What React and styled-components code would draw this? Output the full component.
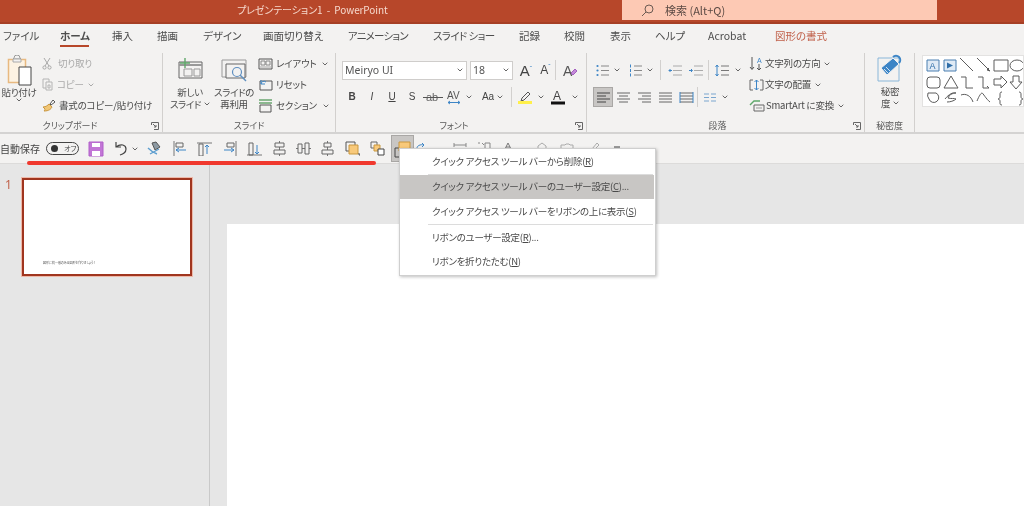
import React from "react";
import styled, { createGlobalStyle } from "styled-components";

const Global = createGlobalStyle`
  html, body { margin: 0; padding: 0; background: #e6e6e6; }
  * { box-sizing: border-box; }
  #root { width: 1024px; height: 506px; overflow: hidden; }
`;
const FONT = `"Noto Sans CJK JP", "Noto Sans", sans-serif`;

const Page = styled.div`
  position: relative; width: 1024px; height: 506px; overflow: hidden;
  display: flex; flex-direction: column; background: #e6e6e6;
  font-family: ${FONT}; font-feature-settings: "palt"; color: #4a4a4a; font-size: 10px; line-height: 1;
  filter: blur(0.4px);
`;
const TitleBar = styled.header`
  height: 24px; flex: none; display: flex; background: #b7472a; border-bottom: 2px solid #a63f25;
`;
const Title = styled.div`
  margin-left: 237px; width: 385px; padding-top: 5px; color: #f6d9cd; font-size: 10px; white-space: pre; letter-spacing: -0.1px;
`;
const Search = styled.div`
  width: 315px; height: 20px; background: #fdc9b4; display: flex; align-items: center; gap: 11px;
  padding-left: 19px; color: #5b4a44; font-size: 11px;
`;
const Tabs = styled.nav`
  height: 24px; flex: none; display: flex; background: #f3f2f1; padding-left: 3px;
`;
const Tab = styled.div`
  width: ${p => p.$w}px; margin-right: ${p => p.$g}px; flex: none; white-space: nowrap; padding-top: 7px;
  font-size: 10.5px; height: 24px; position: relative; color: ${p => p.$color || "#4d4d4d"};
  font-weight: ${p => p.$on ? 700 : 400}; letter-spacing: ${p => p.$ls || 0}px;
  ${p => p.$on && `&::after { content: ""; position: absolute; left: 0; right: 0; bottom: 1px; height: 2px; background: #b7472a; }`}
`;
const Ribbon = styled.section`
  height: 86px; flex: none; display: flex; background: #f3f2f1; border-bottom: 2px solid #d4d3d2; padding-top: 5px;
`;
const Group = styled.div`
  width: ${p => p.$w}px; flex: none; height: 79px; display: flex; flex-direction: column;
  border-right: ${p => p.$last ? "none" : "1px solid #d2d0ce"};
`;
const GroupBody = styled.div`
  height: 65px; flex: none; display: flex; padding-left: ${p => p.$pl || 0}px;
`;
const GroupLabel = styled.div`
  flex: 1; position: relative; text-align: center; font-size: 9px; color: #5a5a5a; padding-top: 3px; white-space: nowrap;
  padding-right: ${p => p.$pr || 0}px; letter-spacing: -0.1px;
`;
const Launcher = styled.svg`
  position: absolute; right: 3px; top: 4px; width: 8px; height: 8px;
`;
const BigButton = styled.div`
  width: ${p => p.$w}px; margin-right: ${p => p.$mr || 0}px; flex: none; display: flex; flex-direction: column; align-items: center;
  font-size: 9.5px; line-height: 12px; text-align: center; white-space: nowrap; letter-spacing: -0.35px;
`;
const BigIcon = styled.div`
  height: ${p => p.$h}px; flex: none; display: flex; align-items: flex-end; justify-content: center;
`;
const BigLine = styled.div`
  margin-top: ${p => p.$mt || 0}px; display: flex; align-items: center; height: 12px;
`;
const SmallStack = styled.div`
  display: flex; flex-direction: column; margin-left: ${p => p.$ml || 0}px;
`;
const SmallRow = styled.div`
  height: ${p => p.$h || 21}px; display: flex; align-items: center; gap: ${p => p.$gap ?? 3}px; white-space: nowrap; font-size: 9.5px; letter-spacing: -0.2px;
  color: ${p => p.$muted ? "#a9a9a9" : "inherit"};
`;
const Chevron = styled.svg`
  width: 6px; height: 4px; margin-left: ${p => p.$ml ?? 3}px; flex: none;
`;
const Chev = ({ ml, color = "#666" }) => (
  <Chevron $ml={ml} viewBox="0 0 6 4"><path d="M.7.7 3 3 5.3.7" fill="none" stroke={color} strokeWidth="1" /></Chevron>
);
const FontColumn = styled.div`
  display: flex; flex-direction: column; padding-left: ${p => p.$pl ?? 6}px; padding-top: 8px;
`;
const ComboRow = styled.div`
  display: flex; align-items: center; height: 18px;
`;
const Combo = styled.div`
  width: ${p => p.$w}px; height: 19px; margin-right: ${p => p.$mr || 0}px; background: #fff; border: 1px solid #cfcdcb; display: flex; align-items: center;
  justify-content: space-between; padding: 0 3px 0 2px; font-size: 10.5px; font-family: "Noto Sans", sans-serif; color: #555; flex: none;
`;
const ToolRow = styled.div`
  display: flex; align-items: center; height: ${p => p.$h || 20}px; margin-top: ${p => p.$mt || 0}px;
`;
const Cell = styled.div`
  width: ${p => p.$w}px; height: 20px; flex: none; display: flex; align-items: center; justify-content: ${p => p.$start ? "flex-start" : "center"};
  font-family: "Liberation Sans", sans-serif; color: #444;
  font-size: ${p => p.$fs || 12}px; font-weight: ${p => p.$b ? 700 : 400}; font-style: ${p => p.$i ? "italic" : "normal"};
  text-decoration: ${p => p.$td || "none"};
  background: ${p => p.$on ? "#c8c6c4" : "transparent"}; border: ${p => p.$on ? "1px solid #a9a7a5" : "none"};
  border-right: ${p => p.$sep ? "1px solid #d2d0ce" : undefined};
`;
const Gallery = styled.div`
  width: 102px; height: 52px; margin: 2px 0 0 7px; background: #fff; border: 1px solid #e3e2e1; overflow: hidden;
`;
const QuickBar = styled.section`
  height: 30px; flex: none; display: flex; align-items: center; background: #f3f2f1; border-bottom: 1px solid #dcdbda;
`;
const AutoSave = styled.span`
  font-size: 10px; width: 46px; flex: none; white-space: nowrap; color: #444;
`;
const Toggle = styled.div`
  width: 33px; height: 13px; flex: none; border: 1px solid #444; border-radius: 7px; display: flex; align-items: center;
  padding-left: 4px; gap: 6px; font-size: 7px; color: #444;
  &::before { content: ""; width: 7px; height: 7px; border-radius: 50%; background: #333; }
`;
const QatIcon = styled.div`
  width: ${p => p.$w}px; height: 27px; flex: none; display: flex; align-items: center; justify-content: center;
  background: ${p => p.$on ? "#c8c6c4" : "transparent"}; border: ${p => p.$on ? "1px solid #a9a7a5" : "none"};
  margin-left: ${p => p.$ml || 0}px;
`;
const Workspace = styled.main`
  flex: 1; display: flex; min-height: 0;
`;
const Thumbs = styled.aside`
  width: 210px; flex: none; border-right: 1px solid #c9c9c9; background: #e6e6e6; display: flex; padding: 14px 0 0 5px;
`;
const ThumbNumber = styled.span`
  width: 17px; flex: none; color: #c0624a; font-size: 12px; padding-top: 1px; font-family: "Noto Sans", sans-serif;
`;
const Thumb = styled.div`
  width: 170px; height: 98px; background: #fff; border: 2px solid #a0351f; box-shadow: 0 0 0 1px #eeb9a9;
  display: flex; align-items: flex-end; padding: 0 0 9px 19px; font-size: 3px; color: #555; white-space: nowrap;
`;
const Editor = styled.div`
  flex: 1; background: #e6e6e6; padding: 60px 0 0 17px; display: flex;
`;
const Slide = styled.div`
  flex: 1; background: #fff;
`;
const RedLine = styled.div`
  position: absolute; left: 27px; top: 161px; width: 349px; height: 4px; border-radius: 2px; background: #f0382e;
`;
const Menu = styled.div`
  position: absolute; left: 399px; top: 148px; width: 257px; height: 128px; background: #fff; border: 1px solid #cfcfcf;
  box-shadow: 1px 1px 3px rgba(0,0,0,.25); padding-top: 1px; display: flex; flex-direction: column;
`;
const MenuItem = styled.div`
  height: ${p => p.$h}px; margin-bottom: ${p => p.$mb || 0}px; flex: none; display: flex; align-items: center; padding-left: 32px; font-size: 9.5px; color: #4a4a4a;
  white-space: pre; letter-spacing: -0.27px; background: ${p => p.$on ? "#c8c6c4" : "transparent"}; margin-right: ${p => p.$on ? 1 : 0}px;
  u { text-underline-offset: 1px; }
`;
const MenuSep = styled.div`
  height: 1px; flex: none; margin: 0 2px 0 28px; background: #dcdcdc;
`;

const I = ({ w, h, vb, children, sw = 1, stroke = "#555", fill = "none" }) => (
  <svg width={w} height={h} viewBox={vb || `0 0 ${w} ${h}`} fill={fill} stroke={stroke} strokeWidth={sw}>{children}</svg>
);

const PasteIcon = () => (
  <I w={25} h={31}>
    <path d="M1.500 4.500h17v23h-17z" fill="#fdf3e3" stroke="#e8b980" strokeWidth="1.500" />
    <path d="M6 4h8l-1-1a3 3 0 0 0-6 0z" fill="#f3f2f1" stroke="#999" />
    <path d="M6 4h8v3H6z" fill="#f3f2f1" stroke="#aaa" />
    <path d="M12 12h12v18H12z" fill="#fff" stroke="#444" />
  </I>
);
const NewSlide = () => (
  <I w={28} h={22}>
    <path d="M3 4h23v16H3z" stroke="#666" />
    <path d="M3 7h23" stroke="#999" strokeWidth="2" />
    <path d="M8 11h8v7H8zM18 11h6v7h-6z" stroke="#999" />
    <path d="M9 0v10M4 5h10" stroke="#5fa86a" strokeWidth="1.400" />
  </I>
);
const ReuseSlide = () => (
  <I w={27} h={24}>
    <path d="M1 1h24v17H1z" stroke="#999" />
    <path d="M5 5h19v14H5z" fill="#f3f2f1" stroke="#666" />
    <circle cx="16" cy="13" r="4.500" stroke="#5f8fc0" fill="#f3f2f1" strokeWidth="1.200" />
    <path d="m19 16 6 6" stroke="#5f8fc0" strokeWidth="1.400" />
  </I>
);
const Layout = () => (
  <I w={15} h={12}><path d="M1 1h13v10H1z" /><path d="M3 3h4v4H3zM8 3h4v4H8z" stroke="#888" /><path d="M1 9h13" stroke="#aaa" /></I>
);
const Reset = () => (
  <I w={15} h={12}><path d="M2 2h12v9H2z" /><path d="M3 5a3 3 0 0 1 5-2M3 1v4h4" stroke="#3d85c6" /></I>
);
const Section = () => (
  <I w={15} h={14}><path d="M1 1h13M1 4h13" stroke="#6aa56f" strokeWidth="1.300" /><path d="M2 6h11v7H2z" /></I>
);
const Scissors = () => (
  <I w={10} h={13} stroke="#a8a8a8"><path d="m2 1 5 8M8 1 3 9" /><circle cx="2.500" cy="10.500" r="1.600" /><circle cx="7.500" cy="10.500" r="1.600" /></I>
);
const CopyIcon = () => (
  <I w={14} h={13} stroke="#b4b4b4"><path d="M1 1h6v9H1z" /><path d="M4 4h6v8H4z" fill="#f3f2f1" /><path d="M6 7h2v3H6z" /></I>
);
const Brush = () => (
  <I w={14} h={13}><path d="m8 5 3-4 2 2-4 3z" fill="#fff" stroke="#555" /><path d="M1 8c3 0 5-2 6-3l3 3c-1 2-3 4-8 4 1-1 1-2 1-2z" fill="#f1c675" stroke="#c9973f" /></I>
);
const Launch = () => (
  <Launcher viewBox="0 0 8 8" fill="none" stroke="#666" strokeWidth="1"><path d="M.5 3V.5h7v7H3M2 2l3 3M5 3v2H3" /></Launcher>
);
const GrowText = styled.span`
  font-size: ${p => p.$up ? 15 : 12}px; font-family: "Liberation Sans", sans-serif; color: #444;
  sup { font-size: 7px; vertical-align: 5px; color: #3d85c6; line-height: 0; }
`;
const Grow = ({ up }) => <GrowText $up={up}>A<sup>{up ? "ˆ" : "ˇ"}</sup></GrowText>;
const ClearFmt = () => (
  <I w={16} h={15}><text x="1" y="13" fontSize="14" fill="#555" stroke="none" fontFamily="Liberation Sans">A</text><path d="m9 10 4-4 2 2-4 4z" fill="#c48ad9" stroke="#a45fc0" /></I>
);
const Strike = () => (
  <I w={20} h={12}><text x="3" y="10" fontSize="11" fill="#666" stroke="none" fontFamily="Liberation Sans">ab</text><path d="M0 6.500h20" stroke="#555" /></I>
);
const Spacing = () => (
  <I w={14} h={15}><text x="0" y="9" fontSize="10" fill="#555" stroke="none" fontFamily="Liberation Sans">AV</text><path d="M1 12.500h12M3 11l-2 1.500L3 14M11 11l2 1.500-2 1.500" stroke="#3d85c6" /></I>
);
const Highlight = () => (
  <I w={16} h={15}><path d="m5 8 6-6 2 2-6 6-3 1z" stroke="#555" /><path d="M1 12.500h14" stroke="#fff04a" strokeWidth="3" /></I>
);
const FontColor = () => (
  <I w={14} h={15}><text x="2" y="10" fontSize="12" fill="#444" stroke="none" fontFamily="Liberation Sans">A</text><path d="M0 13h14" stroke="#111" strokeWidth="3" /></I>
);
const Lines = ({ rows }) => (
  <I w={15} h={13}>{rows.map((r, i) => <path key={i} d={`M${r[0]} ${r[2]}h${r[1]}`} stroke={r[3] || "#666"} />)}</I>
);
const Bullets = () => (
  <I w={13} h={13}>
    {[2, 6.500, 11].map(y => <React.Fragment key={y}><circle cx="1.500" cy={y} r="1.100" fill="#3d85c6" stroke="none" /><path d={`M5 ${y}h8`} stroke="#888" /></React.Fragment>)}
  </I>
);
const Numbered = () => (
  <I w={13} h={13}>
    {[2, 6.500, 11].map(y => <React.Fragment key={y}><path d={`M1.500 ${y - 1.500}v3`} stroke="#3d85c6" /><path d={`M5 ${y}h8`} stroke="#888" /></React.Fragment>)}
  </I>
);
const Indent = ({ right }) => (
  <I w={14} h={11}>
    <path d="M5 1h9M5 5.500h9M5 10h9" stroke="#aaa" />
    <path d={right ? "M0 5.500h3M2 4l1.500 1.500L2 7" : "M4 5.500H1M2.500 4 1 5.500 2.500 7"} stroke="#3d85c6" />
  </I>
);
const LineSpacing = () => (
  <I w={14} h={13}><path d="M2 1v11M.5 3 2 1l1.500 2M.5 10 2 12l1.500-2" stroke="#3d85c6" /><path d="M6 2h8M6 6.500h8M6 11h8" stroke="#777" /></I>
);
const Columns = () => (
  <I w={12} h={9}><path d="M0 1h5M7 1h5M0 4.500h5M7 4.500h5M0 8h5M7 8h5" stroke="#7aa6cf" /></I>
);
const TextDir = () => (
  <I w={15} h={16}><path d="M3 1v12M1 11l2 2.500L5 11" stroke="#555" /><text x="8" y="7" fontSize="7" fill="#3d85c6" stroke="none" fontFamily="Liberation Sans">A</text><path d="M10 8v6M8 12l2 2 2-2" stroke="#555" /></I>
);
const TextAlign = () => (
  <I w={15} h={12}><path d="M4 1H1v10h3M11 1h3v10h-3" stroke="#666" /><path d="M7.500 1v10M5.500 3l2-2 2 2M5.500 9l2 2 2-2" stroke="#3d85c6" /></I>
);
const SmartArt = () => (
  <I w={16} h={12}><path d="M1 5 5 1h6" stroke="#5fa86a" strokeWidth="1.400" /><path d="M5 5h10v6H5z" stroke="#666" /><path d="M7 8h6" stroke="#999" /></I>
);
const Sensitivity = () => (
  <I w={26} h={28}>
    <path d="M1 4h21v23H1z" stroke="#8ab7d9" />
    <path d="m4 14 12-10 6 6-12 11z" fill="#3d85c6" stroke="#f3f2f1" />
    <path d="M16 3a4 4 0 1 1 6 6" stroke="#3d85c6" strokeWidth="2" />
    <path d="m7 15 5 5M9 13l5 5" stroke="#cfe2f3" />
  </I>
);
const Shapes = () => (
  <svg width="102" height="52" viewBox="0 0 102 52" fill="none" stroke="#5c5c5c" strokeWidth="1">
    <path d="M4 4h12v11H4z" fill="#dfeaf5" stroke="#4a7fb0" /><text x="6.500" y="13" fontSize="9" fill="#2f6ea8" stroke="none" fontFamily="Liberation Sans">A</text>
    <path d="M21 4h12v11H21z" fill="#dfeaf5" stroke="#4a7fb0" /><path d="m24 6.500 6 3-6 3z" fill="#2f6ea8" stroke="none" />
    <path d="m37 2 13 13M54 2l13 13M67 15l-3-1 2-2" />
    <path d="M71 4h14v11H71z" /><ellipse cx="94" cy="9.500" rx="7" ry="5.500" />
    <rect x="4" y="21" width="13" height="11" rx="3" /><path d="m28 20 7 12H21z" />
    <path d="M38 21h5v11h7M55 21h5v11h6l-2-2" />
    <path d="M71 23h7v-3l6 6-6 6v-3h-7z" /><path d="M90 20h6v6h3l-6 7-6-7h3z" />
    <path d="M5 37h8a5 5 0 1 1-7 6 6 6 0 0 1-1-6zM22 43c4-5 8-7 11-6-4 0-7 2-8 5 3 1 6 0 8 1-2 2-6 3-9 3" />
    <path d="M38 39c5-2 10 1 12 7M54 45c2-5 4-8 5-8s4 6 8 9" />
    <path d="M79 36c-2 0-2 1-2 3v2c0 1-1 2-2 2 1 0 2 1 2 2v2c0 1 0 2 2 2M96 36c2 0 2 1 2 3v2c0 1 1 2 2 2-1 0-2 1-2 2v2c0 1 0 2-2 2" />
  </svg>
);

const qat = {
  save: <I w={16} h={16}><path d="M1 1h14v14H1z" fill="#c276d6" stroke="#b05fc9" /><path d="M4 2h8v4H4zM4 10h8v5H4z" fill="#fff" stroke="none" /></I>,
  undo: <I w={15} h={15}><path d="M3 6c5-4 10-2 10 2s-3 5-6 6M3 1v5h5" stroke="#444" strokeWidth="1.200" /></I>,
  eraser: <I w={16} h={16}><path d="m5 2 4-1 4 5-5 3z" fill="#8d9aa3" stroke="#555" /><path d="M1 7c3 3 6 5 9 6M3 13l9-5" stroke="#5f9fd0" strokeWidth="1.400" /></I>,
  left: <I w={14} h={15}><path d="M1 0v15" stroke="#777" /><path d="M3 2h7v4H3z" stroke="#666" /><path d="M3 9h10M6 7 3 9l3 2" stroke="#3d85c6" /></I>,
  top: <I w={15} h={14}><path d="M0 1h15" stroke="#777" /><path d="M2 2h4v12H2z" stroke="#666" /><path d="M10 3v9M8 5l2-2 2 2" stroke="#3d85c6" /></I>,
  right: <I w={14} h={15}><path d="M13 0v15" stroke="#777" /><path d="M4 2h7v4H4z" stroke="#666" /><path d="M1 9h10M8 7l3 2-3 2" stroke="#3d85c6" /></I>,
  bottom: <I w={15} h={14}><path d="M0 13h15" stroke="#777" /><path d="M2 1h4v12H2z" stroke="#666" /><path d="M10 3v9M8 10l2 2 2-2" stroke="#3d85c6" /></I>,
  midH: <I w={13} h={15}><path d="M6.500 0v15" stroke="#777" /><path d="M2 2h9v4H2zM1 9h11v4H1z" fill="#f3f2f1" stroke="#666" /></I>,
  midV: <I w={15} h={13}><path d="M0 6.500h15" stroke="#777" /><path d="M2 2h4v9H2zM9 1h4v11H9z" fill="#f3f2f1" stroke="#666" /></I>,
  distH: <I w={13} h={15}><path d="M6.500 0v15" stroke="#777" /><path d="M3 2h7v4H3zM1 9h11v4H1z" fill="#f3f2f1" stroke="#666" /></I>,
  front: <I w={15} h={15}><path d="M1 1h9v9H1z" stroke="#555" /><path d="M4 4h9v9H4z" fill="#f8c97a" stroke="#c9973f" /><path d="M13 13h2v2" stroke="#444" /></I>,
  back: <I w={15} h={15}><path d="M1 1h6v6H1z" stroke="#666" /><path d="M4 4h6v6H4z" fill="#f8c97a" stroke="#c9973f" /><path d="M8 8h6v6H8z" fill="#fff" stroke="#444" /></I>,
  group: <I w={18} h={18}><path d="M1 8h8v9H1z" stroke="#444" /><path d="M5 2h11v9H5z" fill="#f8c97a" stroke="#c9973f" /></I>,
  turn: <I w={10} h={14}><path d="M1 6c0-2 3-4 7-3M6 1l2 2-2 2" stroke="#3d85c6" /></I>,
  faintA: <I w={14} h={14} stroke="#888"><path d="M1 1v4M13 1v4M1 3h12M1 7h12" /></I>,
  faintB: <I w={14} h={14} stroke="#888"><path d="M1 1h2M5 1l2 2M8 1h5v6H8z" /></I>,
  faintC: <I w={10} h={14} stroke="#777"><path d="M2 7 5 1l3 6M3 5h4" /></I>,
  faintD: <I w={12} h={14} stroke="#aaa"><path d="M2 7V4l4-3 4 3v3" /></I>,
  faintE: <I w={14} h={14} stroke="#aaa"><path d="M1 7V3h4l1-1h3l1 1h3v4" /></I>,
  faintF: <I w={10} h={14} stroke="#aaa"><path d="M2 7l5-6 2 2-4 4" /></I>,
  faintG: <I w={8} h={14} stroke="#999" sw={2}><path d="M1 5h6" /></I>,
};

const tabs = [
  ["ファイル", 32, 25], ["ホーム", 29, 23], ["挿入", 22, 23], ["描画", 22, 24], ["デザイン", 36, 24], ["画面切り替え", 61, 24],
  ["アニメーション", 59, 26, -0.8], ["スライド ショー", 60, 26, -0.6], ["記録", 22, 23], ["校閲", 22, 24], ["表示", 22, 23], ["ヘルプ", 28, 25],
  ["Acrobat", 43, 24], ["図形の書式", 54, 0],
];

export default function App() {
  return (
    <Page>
      <Global />
      <TitleBar>
        <Title>プレゼンテーション1  -  PowerPoint</Title>
        <Search>
          <I w={13} h={13} stroke="#6b5a52"><circle cx="8" cy="5" r="4" /><path d="M5 8 1 12" /></I>
          <span>検索 (Alt+Q)</span>
        </Search>
      </TitleBar>
      <Tabs>
        {tabs.map(([t, w, g, ls]) => (
          <Tab key={t} $w={w} $g={g} $ls={ls} $on={t === "ホーム"} $color={t === "図形の書式" ? "#c0604a" : undefined}>{t}</Tab>
        ))}
      </Tabs>
      <Ribbon>
        <Group $w={163}>
          <GroupBody $pl={1}>
            <BigButton $w={36}>
              <BigIcon $h={33}><PasteIcon /></BigIcon>
              <BigLine>貼り付け</BigLine>
              <Chev ml={0} />
            </BigButton>
            <SmallStack $ml={5}>
              <SmallRow $muted $gap={6}><Scissors />切り取り</SmallRow>
              <SmallRow $muted $gap={1}><CopyIcon />コピー<Chev color="#aaa" /></SmallRow>
              <SmallRow><Brush />書式のコピー/貼り付け</SmallRow>
            </SmallStack>
          </GroupBody>
          <GroupLabel $pr={22}>クリップボード<Launch /></GroupLabel>
        </Group>
        <Group $w={173}>
          <GroupBody $pl={7}>
            <BigButton $w={40} $mr={4}>
              <BigIcon $h={27}><NewSlide /></BigIcon>
              <BigLine $mt={6}>新しい</BigLine>
              <BigLine>スライド<Chev /></BigLine>
            </BigButton>
            <BigButton $w={40}>
              <BigIcon $h={30}><ReuseSlide /></BigIcon>
              <BigLine $mt={3}>スライドの</BigLine>
              <BigLine>再利用</BigLine>
            </BigButton>
            <SmallStack $ml={4}>
              <SmallRow><Layout />レイアウト<Chev /></SmallRow>
              <SmallRow><Reset />リセット</SmallRow>
              <SmallRow><Section />セクション<Chev /></SmallRow>
            </SmallStack>
          </GroupBody>
          <GroupLabel>スライド</GroupLabel>
        </Group>
        <Group $w={251}>
          <GroupBody>
            <FontColumn>
              <ComboRow>
                <Combo $w={125} $mr={3}>Meiryo UI<Chev ml={0} /></Combo>
                <Combo $w={43} $mr={3}>18<Chev ml={0} /></Combo>
                <Cell $w={20}><Grow up /></Cell>
                <Cell $w={20} $sep><Grow /></Cell>
                <Cell $w={27}><ClearFmt /></Cell>
              </ComboRow>
              <ToolRow $mt={8}>
                <Cell $w={20} $b $fs={10}>B</Cell>
                <Cell $w={20} $i $fs={10}>I</Cell>
                <Cell $w={20} $td="underline" $fs={10}>U</Cell>
                <Cell $w={20} $fs={10}>S</Cell>
                <Cell $w={22}><Strike /></Cell>
                <Cell $w={30}><Spacing /><Chev ml={5} /></Cell>
                <Cell $w={38} $fs={10} $sep>Aa<Chev ml={3} /></Cell>
                <Cell $w={36}><Highlight /><Chev ml={5} /></Cell>
                <Cell $w={32}><FontColor /><Chev ml={7} /></Cell>
              </ToolRow>
            </FontColumn>
          </GroupBody>
          <GroupLabel $pr={14}>フォント<Launch /></GroupLabel>
        </Group>
        <Group $w={278}>
          <GroupBody $pl={6}>
            <FontColumn $pl={0}>
              <ToolRow $h={18}>
                <Cell $w={18}><Bullets /></Cell>
                <Cell $w={12}><Chev ml={0} /></Cell>
                <Cell $w={24}><Numbered /></Cell>
                <Cell $w={14} $sep $start><Chev ml={0} /></Cell>
                <Cell $w={28}><Indent /></Cell>
                <Cell $w={20} $sep $start><Indent right /></Cell>
                <Cell $w={26}><LineSpacing /></Cell>
                <Cell $w={6}><Chev ml={0} /></Cell>
              </ToolRow>
              <ToolRow $mt={8}>
                <Cell $w={20} $on><Lines rows={[[1, 13, 2, "#444"], [1, 9, 5, "#444"], [1, 13, 8, "#444"], [1, 9, 11, "#444"]]} /></Cell>
                <Cell $w={21}><Lines rows={[[1, 13, 2], [3, 9, 5], [1, 13, 8], [3, 9, 11]]} /></Cell>
                <Cell $w={21}><Lines rows={[[1, 13, 2], [5, 9, 5], [1, 13, 8], [5, 9, 11]]} /></Cell>
                <Cell $w={20}><Lines rows={[[1, 13, 2], [1, 13, 5], [1, 13, 8], [1, 13, 11]]} /></Cell>
                <Cell $w={23} $sep><I w={15} h={13}><path d="M1 2h13M1 5h13M1 8h13M1 11h13" stroke="#666" /><path d="M1 1v11M14 1v11" stroke="#3d85c6" /></I></Cell>
                <Cell $w={24}><Columns /></Cell>
                <Cell $w={6}><Chev ml={0} /></Cell>
              </ToolRow>
            </FontColumn>
            <SmallStack $ml={8}>
              <SmallRow $gap={1}><TextDir />文字列の方向<Chev /></SmallRow>
              <SmallRow $gap={1}><TextAlign />文字の配置<Chev /></SmallRow>
              <SmallRow $gap={1}><SmartArt />SmartArt に変換<Chev /></SmallRow>
            </SmallStack>
          </GroupBody>
          <GroupLabel $pr={16}>段落<Launch /></GroupLabel>
        </Group>
        <Group $w={50}>
          <GroupBody>
            <BigButton $w={50}>
              <BigIcon $h={29}><Sensitivity /></BigIcon>
              <BigLine $mt={3}>秘密</BigLine>
              <BigLine>度<Chev /></BigLine>
            </BigButton>
          </GroupBody>
          <GroupLabel>秘密度</GroupLabel>
        </Group>
        <Group $w={109} $last>
          <GroupBody><Gallery><Shapes /></Gallery></GroupBody>
        </Group>
      </Ribbon>
      <QuickBar>
        <AutoSave>自動保存</AutoSave>
        <Toggle>オフ</Toggle>
        <QatIcon $w={18} $ml={8}>{qat.save}</QatIcon>
        <QatIcon $w={21} $ml={5}>{qat.undo}</QatIcon>
        <QatIcon $w={8}><Chev ml={0} /></QatIcon>
        <QatIcon $w={25} $ml={3}>{qat.eraser}</QatIcon>
        <QatIcon $w={25}>{qat.left}</QatIcon>
        <QatIcon $w={25}>{qat.top}</QatIcon>
        <QatIcon $w={25}>{qat.right}</QatIcon>
        <QatIcon $w={25}>{qat.bottom}</QatIcon>
        <QatIcon $w={24}>{qat.midH}</QatIcon>
        <QatIcon $w={24}>{qat.midV}</QatIcon>
        <QatIcon $w={25}>{qat.distH}</QatIcon>
        <QatIcon $w={25}>{qat.front}</QatIcon>
        <QatIcon $w={25}>{qat.back}</QatIcon>
        <QatIcon $w={23} $ml={1} $on>{qat.group}</QatIcon>
        <QatIcon $w={14}>{qat.turn}</QatIcon>
        <QatIcon $w={14} $ml={25}>{qat.faintA}</QatIcon>
        <QatIcon $w={14} $ml={10}>{qat.faintB}</QatIcon>
        <QatIcon $w={14} $ml={10}>{qat.faintC}</QatIcon>
        <QatIcon $w={14} $ml={20}>{qat.faintD}</QatIcon>
        <QatIcon $w={14} $ml={11}>{qat.faintE}</QatIcon>
        <QatIcon $w={14} $ml={14}>{qat.faintF}</QatIcon>
        <QatIcon $w={14} $ml={8}>{qat.faintG}</QatIcon>
      </QuickBar>
      <Workspace>
        <Thumbs>
          <ThumbNumber>1</ThumbNumber>
          <Thumb>図形に統一感のある図形を作りましょう！</Thumb>
        </Thumbs>
        <Editor><Slide /></Editor>
      </Workspace>
      <RedLine />
      <Menu>
        <MenuItem $h={24}>クイック アクセス ツール バーから削除(<u>R</u>)</MenuItem>
        <MenuSep />
        <MenuItem $h={24} $on $mb={1}>クイック アクセス ツール バーのユーザー設定(<u>C</u>)...</MenuItem>
        <MenuItem $h={24}>クイック アクセス ツール バーをリボンの上に表示(<u>S</u>)</MenuItem>
        <MenuSep />
        <MenuItem $h={26}>リボンのユーザー設定(<u>R</u>)...</MenuItem>
        <MenuItem $h={21}>リボンを折りたたむ(<u>N</u>)</MenuItem>
      </Menu>
    </Page>
  );
}
